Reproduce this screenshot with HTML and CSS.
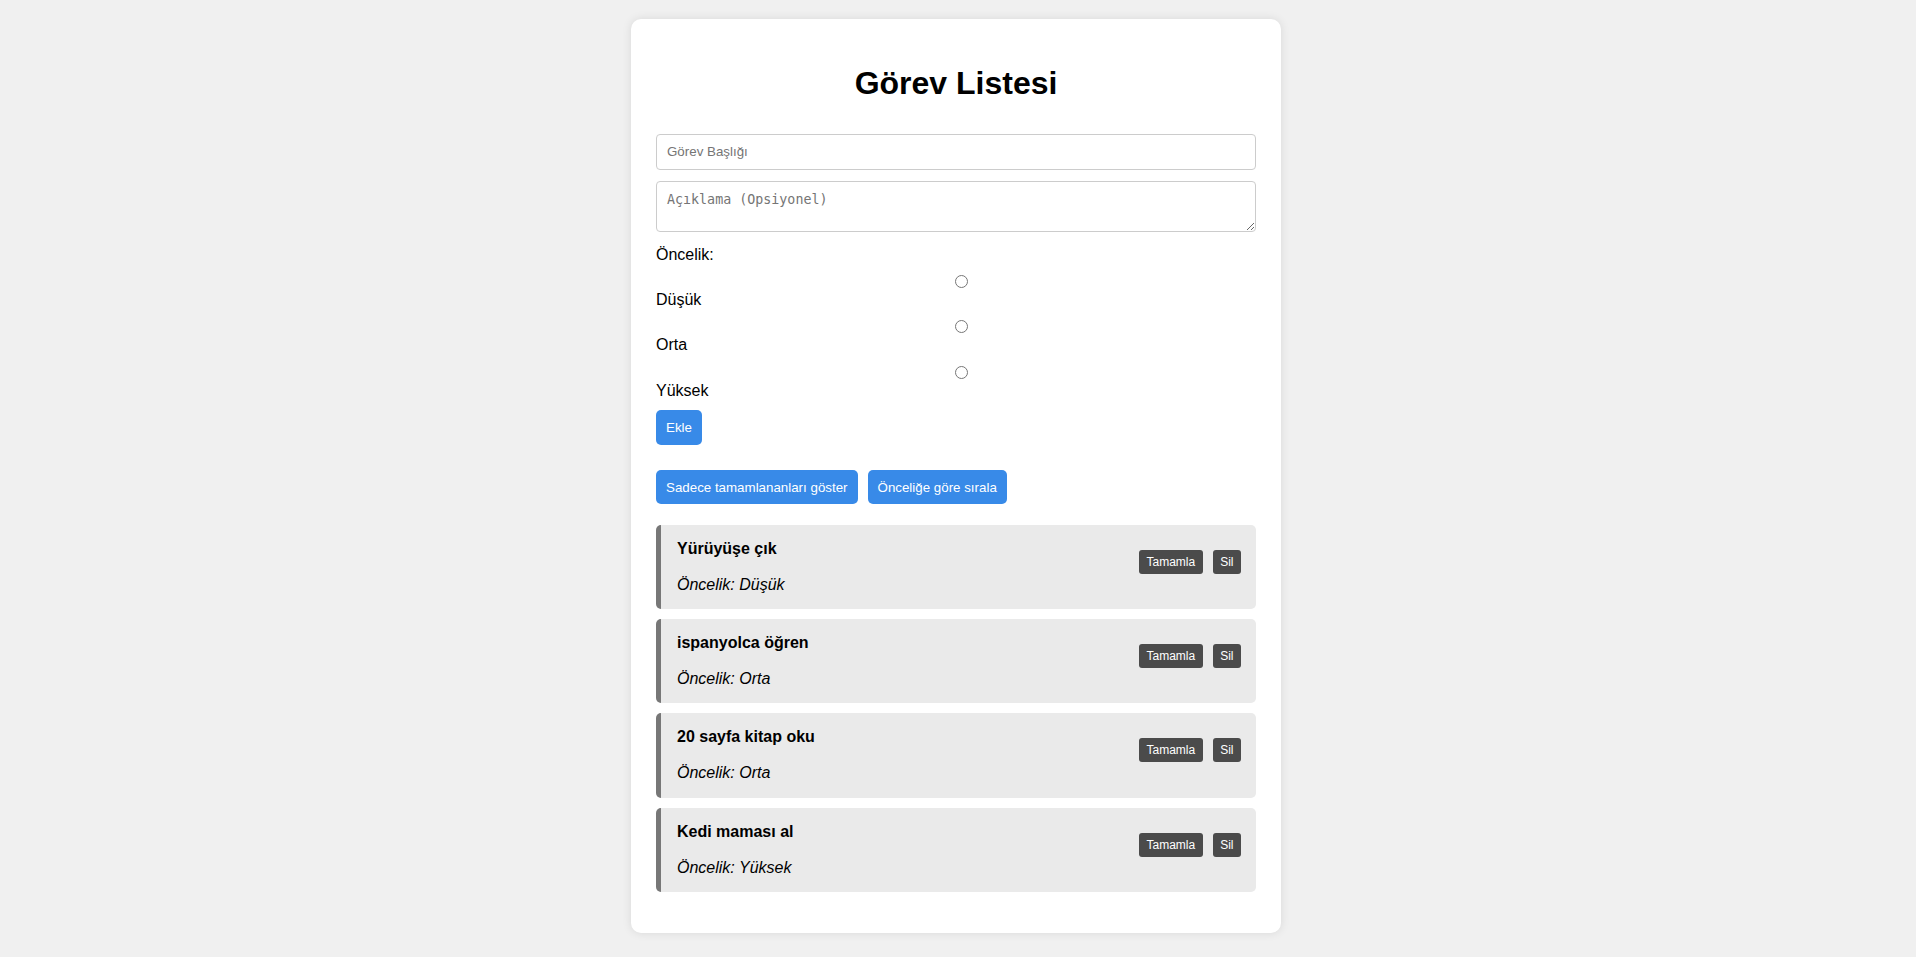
FILE: index.html
```html
<!DOCTYPE html>
<html lang="tr">
<head>
<meta charset="utf-8">
<title>Görev Listesi</title>
<link rel="stylesheet" href="styles.css">
</head>
<body>
<div class="container">
  <h1 class="title">Görev Listesi</h1>
  <form class="task-form">
    <input class="field field-text" type="text" placeholder="Görev Başlığı">
    <textarea class="field field-area" placeholder="Açıklama (Opsiyonel)"></textarea>
    <div class="prio-label">Öncelik:</div>
    <label class="option"><span class="radio-row"><input class="radio" type="radio" name="priority" value="low"></span><span class="option-text">Düşük</span></label>
    <label class="option"><span class="radio-row"><input class="radio" type="radio" name="priority" value="medium"></span><span class="option-text">Orta</span></label>
    <label class="option"><span class="radio-row"><input class="radio" type="radio" name="priority" value="high"></span><span class="option-text">Yüksek</span></label>
    <button class="btn btn-add" type="button">Ekle</button>
  </form>
  <div class="filters">
    <button class="btn" type="button">Sadece tamamlananları göster</button>
    <button class="btn" type="button">Önceliğe göre sırala</button>
  </div>
  <ul class="tasks">
    <li class="task">
      <div class="task-info"><div class="task-title">Yürüyüşe çık</div><p class="task-prio">Öncelik: Düşük</p></div>
      <div class="task-actions"><button class="task-btn" type="button">Tamamla</button><button class="task-btn" type="button">Sil</button></div>
    </li>
    <li class="task">
      <div class="task-info"><div class="task-title">ispanyolca öğren</div><p class="task-prio">Öncelik: Orta</p></div>
      <div class="task-actions"><button class="task-btn" type="button">Tamamla</button><button class="task-btn" type="button">Sil</button></div>
    </li>
    <li class="task">
      <div class="task-info"><div class="task-title">20 sayfa kitap oku</div><p class="task-prio">Öncelik: Orta</p></div>
      <div class="task-actions"><button class="task-btn" type="button">Tamamla</button><button class="task-btn" type="button">Sil</button></div>
    </li>
    <li class="task">
      <div class="task-info"><div class="task-title">Kedi maması al</div><p class="task-prio">Öncelik: Yüksek</p></div>
      <div class="task-actions"><button class="task-btn" type="button">Tamamla</button><button class="task-btn" type="button">Sil</button></div>
    </li>
  </ul>
</div>
</body>
</html>
```
FILE: styles.css
```css
body {
  margin: 0;
  padding: 0 4px 0 0;
  background: #f0f0f0;
  font-family: "Liberation Sans", Arial, sans-serif;
  font-size: 16px;
  color: #000;
}

.container {
  width: 600px;
  margin: 19px auto;
  padding: 25px;
  background: #fff;
  border-radius: 10px;
  box-shadow: 0 0 10px rgba(0, 0, 0, 0.1);
}

.title {
  text-align: center;
  font-size: 32px;
  font-weight: bold;
  margin: 21.44px 0;
  line-height: 36.8px;
}

.task-form {
  display: flow-root;
  margin: 0;
}

.field {
  display: block;
  width: 100%;
  box-sizing: border-box;
  margin: 10px 0 0;
  border: 1px solid #ccc;
  border-radius: 4px;
  font-size: 13.333px;
  color: #000;
  background: #fff;
}

.field::placeholder {
  color: #757575;
}

.field-text {
  height: 36px;
  padding: 0 10px;
  font-family: "Liberation Sans", Arial, sans-serif;
}

.field-area {
  height: 51px;
  margin-top: 11px;
  padding: 10px;
  font-family: "DejaVu Sans Mono", monospace;
  line-height: 15px;
}

.prio-label {
  margin-top: 14px;
  line-height: 18.4px;
}

.option {
  display: block;
}

.radio-row {
  display: flex;
  justify-content: center;
  height: 27px;
}

.radio {
  width: 13px;
  height: 13px;
  margin: 11px 0 0 10px;
}

.option-text {
  display: block;
  line-height: 18.4px;
}

.btn {
  display: block;
  height: 34.5px;
  padding: 0 10px;
  border: 0;
  border-radius: 5px;
  background: #388ae8;
  color: #fff;
  font-family: "Liberation Sans", Arial, sans-serif;
  font-size: 13.333px;
}

.btn-add {
  margin-top: 10px;
}

.filters {
  display: flex;
  gap: 10px;
  margin-top: 25px;
}

.tasks {
  list-style: none;
  margin: 20.4px 0 16px;
  padding: 0;
  display: flex;
  flex-direction: column;
  gap: 10px;
}

.task {
  display: flex;
  justify-content: space-between;
  align-items: center;
  padding: 15px 15px 15px 16px;
  background: #eaeaea;
  border-left: 5px solid #777;
  border-radius: 5px;
}

.task-title {
  font-weight: bold;
  line-height: 18.4px;
}

.task-prio {
  margin: 17.5px 0 0;
  font-style: italic;
  line-height: 18.4px;
}

.task-actions {
  display: flex;
  gap: 10px;
  margin-bottom: 10px;
}

.task-btn {
  height: 24px;
  padding: 0 7.5px;
  border: 0;
  border-radius: 3px;
  background: #4b4b4b;
  color: #fff;
  font-family: "Liberation Sans", Arial, sans-serif;
  font-size: 12px;
}
```
